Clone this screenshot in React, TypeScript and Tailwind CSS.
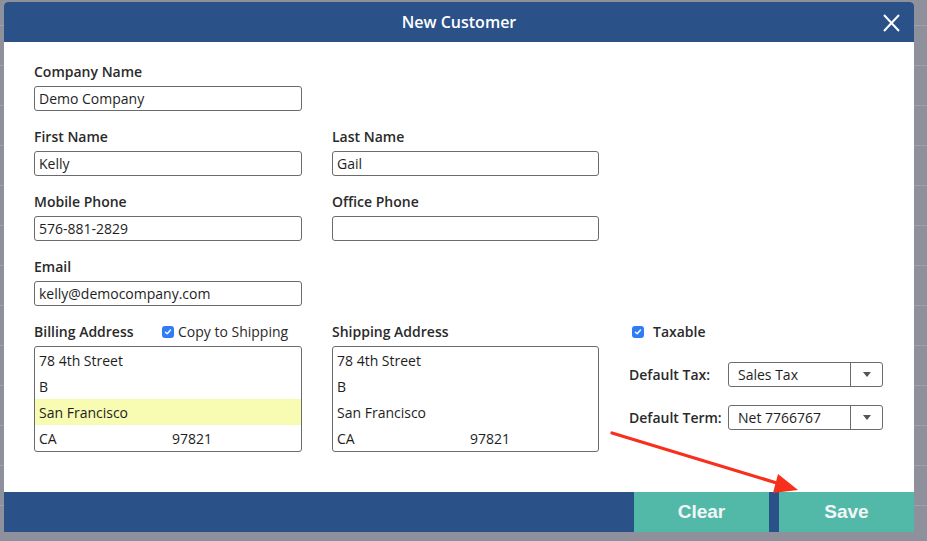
import React from "react";

const font = { fontFamily: '"Open Sans", "Liberation Sans", sans-serif' };

function Check() {
  return (
    <span className="inline-flex w-[12px] h-[12px] rounded-[3px] bg-[#2f7cf6] items-center justify-center">
      <svg width="8" height="8" viewBox="0 0 8 8">
        <path d="M1.5 4.2 L3.2 5.8 L6.5 2" stroke="white" strokeWidth="1.4" fill="none" strokeLinecap="round" strokeLinejoin="round" />
      </svg>
    </span>
  );
}

function Field({ label, value, w }: { label: string; value: string; w: string }) {
  return (
    <div className={`flex flex-col ${w}`}>
      <div className="h-[21px] leading-[19px] text-[14px] font-semibold text-[#2a2a2a]">{label}</div>
      <div className="mt-[3px] h-[25px] border border-[#6b6b6b] rounded-[3px] px-[4px] flex items-center text-[14px] text-[#1e1e1e]">
        {value}
      </div>
    </div>
  );
}

function AddressBox({ highlight }: { highlight?: boolean }) {
  const line = "h-[26px] flex items-center px-[4px] text-[14px] text-[#1e1e1e]";
  return (
    <div className="mt-[3px] h-[106px] border border-[#6b6b6b] rounded-[3px] flex flex-col overflow-hidden">
      <div className={line}>78 4th Street</div>
      <div className={line}>B</div>
      <div className={`${line} ${highlight ? "bg-[#f8fbb2]" : ""}`}>San Francisco</div>
      <div className={line}>
        <span className="w-[133px]">CA</span>
        <span>97821</span>
      </div>
    </div>
  );
}

function Select({ value }: { value: string }) {
  return (
    <div className="w-[155px] h-[25px] border border-[#6b6b6b] rounded-[3px] flex items-center text-[14px] text-[#1e1e1e]">
      <div className="flex-1 pl-[9px]">{value}</div>
      <div className="w-[32px] h-full border-l border-[#6b6b6b] flex items-center justify-center">
        <svg width="10" height="7" viewBox="0 0 10 7">
          <path d="M1 1 L9 1 L5 6 Z" fill="#555" />
        </svg>
      </div>
    </div>
  );
}

export default function App() {
  const rows = Array.from({ length: 13 });
  return (
    <div className="relative w-[927px] h-[541px] bg-[#8e919b] overflow-hidden" style={font}>
      <div className="flex flex-col">
        <div className="h-[26px] border-b border-[#9ea1aa]" />
        {rows.map((_, i) => (
          <div key={i} className="h-[40px] border-b border-[#9ea1aa]" />
        ))}
      </div>

      <div className="absolute left-[4px] top-[2px] w-[910px] h-[530px] bg-white rounded-t-[4px] overflow-hidden flex flex-col">
        <div className="relative h-[40px] bg-[#2a5289] flex items-center justify-center shrink-0">
          <span className="text-white text-[16px] font-semibold">New Customer</span>
          <svg className="absolute left-[879px] top-[12px]" width="17" height="18" viewBox="0 0 17 18">
            <path d="M1 1 L16 17 M16 1 L1 17" stroke="white" strokeWidth="2" />
          </svg>
        </div>

        <div className="flex-1 pl-[30px] pt-[20px] flex flex-col gap-[16px]">
          <div className="flex gap-[30px]">
            <Field label="Company Name" value="Demo Company" w="w-[268px]" />
          </div>
          <div className="flex gap-[30px]">
            <Field label="First Name" value="Kelly" w="w-[268px]" />
            <Field label="Last Name" value="Gail" w="w-[267px]" />
          </div>
          <div className="flex gap-[30px]">
            <Field label="Mobile Phone" value="576-881-2829" w="w-[268px]" />
            <Field label="Office Phone" value="" w="w-[267px]" />
          </div>
          <div className="flex gap-[30px]">
            <Field label="Email" value="kelly@democompany.com" w="w-[268px]" />
          </div>
          <div className="flex gap-[30px]">
            <div className="w-[268px] flex flex-col">
              <div className="h-[21px] pb-[2px] flex items-center text-[14px]">
                <span className="w-[128px] font-semibold text-[#2a2a2a]">Billing Address</span>
                <Check />
                <span className="ml-[4px] text-[#2a2a2a]">Copy to Shipping</span>
              </div>
              <AddressBox highlight />
            </div>
            <div className="w-[267px] flex flex-col">
              <div className="h-[21px] leading-[19px] text-[14px] font-semibold text-[#2a2a2a]">Shipping Address</div>
              <AddressBox />
            </div>
            <div className="flex flex-col text-[14px] text-[#2a2a2a]">
              <div className="h-[21px] pb-[2px] flex items-center pl-[3px]">
                <Check />
                <span className="ml-[9px] font-semibold">Taxable</span>
              </div>
              <div className="mt-[19px] flex items-center">
                <span className="w-[99px] font-semibold">Default Tax:</span>
                <Select value="Sales Tax" />
              </div>
              <div className="mt-[18px] flex items-center">
                <span className="w-[99px] font-semibold">Default Term:</span>
                <Select value="Net 7766767" />
              </div>
            </div>
          </div>
        </div>

        <div className="h-[40px] bg-[#2a5289] flex justify-end shrink-0">
          <div
            className="w-[135px] h-full bg-[#52b9a9] flex items-center justify-center text-[19px] font-bold text-[#f3f6f6]"
            style={{ fontFamily: '"Liberation Sans", Arial, sans-serif' }}
          >
            Clear
          </div>
          <div className="w-[10px]" />
          <div
            className="w-[135px] h-full bg-[#52b9a9] flex items-center justify-center text-[19px] font-bold text-[#f3f6f6]"
            style={{ fontFamily: '"Liberation Sans", Arial, sans-serif' }}
          >
            Save
          </div>
        </div>
      </div>

      <svg className="absolute left-0 top-0 pointer-events-none" width="927" height="541">
        <line x1="612" y1="433" x2="780" y2="484" stroke="#f7301c" strokeWidth="3.2" strokeLinecap="round" />
        <polygon points="798,490 778,474 773,493" fill="#f7301c" />
      </svg>
    </div>
  );
}
